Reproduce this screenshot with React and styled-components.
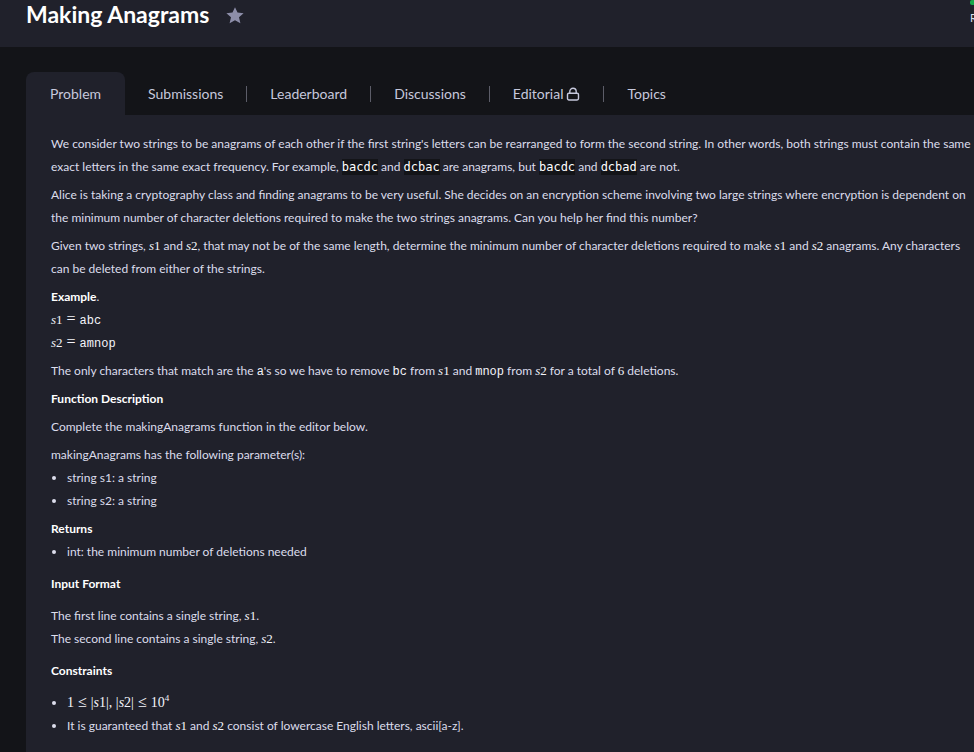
import React from "react";
import styled, { createGlobalStyle } from "styled-components";

const Global = createGlobalStyle`
  * { box-sizing: border-box; }
  html { overflow-x: hidden; scrollbar-width: none; }
  body {
    margin: 0;
    background: #131418;
    color: #dcddec;
    font: 400 12px/23px Lato, "Liberation Sans", sans-serif;
  }
  #root {
    display: flex;
    flex-direction: column;
    min-height: 100vh;
  }
`;

const Header = styled.header`
  display: flex;
  align-items: flex-start;
  height: 47px;
  padding-left: 26px;
  background: #20212b;
`;

const Title = styled.h1`
  margin: 0;
  color: #fff;
  font-size: 23px;
  line-height: 28px;
  font-weight: 700;
`;

const StarButton = styled.button`
  display: flex;
  margin: 7px 0 0 17px;
  padding: 0;
  border: 0;
  background: none;
  color: #8d8ea9;
`;

const Rank = styled.div`
  display: flex;
  flex-direction: column;
  gap: 6px;
  width: 4px;
  margin-left: auto;
  overflow: hidden;
  color: #dcddec;
  font-size: 11px;
  line-height: 14px;
`;

const RankBar = styled.span`
  flex: none;
  width: 40px;
  height: 5px;
  border-radius: 2px;
  background: #1ba94c;
`;

const Page = styled.main`
  display: flex;
  flex: 1;
  flex-direction: column;
  padding: 25px 0 0 26px;
`;

const Tabs = styled.nav`
  display: flex;
  height: 43px;
`;

const Tab = styled.a`
  display: flex;
  align-items: center;
  gap: 3px;
  padding: 0 ${(p) => (p.$active ? 24 : 23)}px;
  border-radius: 8px 8px 0 0;
  background: ${(p) => (p.$active ? "#20212b" : "transparent")};
  color: #c6c8dc;
  font-size: 14px;
  line-height: 20px;
  text-decoration: none;
`;

const Divider = styled.span`
  align-self: center;
  width: 1px;
  height: 16px;
  background: #5c5d68;
`;

const Panel = styled.article`
  display: flex;
  flex: 1;
  flex-direction: column;
  gap: 9px;
  padding: 17px 0 0 25px;
  background: #20212b;
`;

const Section = styled.section`
  display: flex;
  flex-direction: column;
  gap: ${(p) => (p.$spaced ? 9 : 5)}px;
`;

const Group = styled.div``;

const Text = styled.p`
  margin: 0;
`;

const Strong = styled.strong`
  color: #fff;
  font-weight: 700;
`;

const Heading = styled.h2`
  margin: 0;
  color: #fff;
  font-size: 12px;
  line-height: 23px;
  font-weight: 700;
`;

const List = styled.ul`
  margin: 0;
  padding-left: 16px;
  list-style: none;
`;

const Item = styled.li`
  &::before {
    content: "";
    float: left;
    width: 4px;
    height: 4px;
    margin: 10px 0 0 -15px;
    border-radius: 50%;
    background: #dcddec;
  }
`;

const Code = styled.code`
  padding: 1px 0;
  background: #131418;
  color: #fff;
  font: 12px/12px "DejaVu Sans Mono", monospace;
`;

const MathText = styled.span`
  color: #f4f4fa;
  font-family: "Liberation Serif", serif;
  font-size: ${(p) => (p.$large ? 14 : 13)}px;
  line-height: 13px;
  white-space: nowrap;
`;

const Relation = styled.span`
  margin: 0 4px;
  font-size: 16px;
  line-height: 13px;
`;

const Power = styled.sup`
  font-size: 9px;
  line-height: 0;
`;

const Mono = styled.span`
  color: #f4f4fa;
  font: 12px/12px "Liberation Mono", monospace;
`;

const Var = ({ n }) => (
  <MathText><i>s</i>{n}</MathText>
);

const Star = () => (
  <svg width="18" height="17" viewBox="0 0 18 17" fill="currentColor" aria-hidden="true">
    <path d="M9 .2l2.5 5.4 6.1.6-4.6 4.1 1.4 6L9 13.2l-5.4 3.1 1.4-6L.4 6.2l6.1-.6z" />
  </svg>
);

const Lock = () => (
  <svg width="14" height="14" viewBox="0 0 14 14" fill="none" stroke="currentColor" strokeWidth="1.4" aria-hidden="true">
    <rect x="1.5" y="6.2" width="11" height="6.8" rx="1.4" />
    <path d="M3.8 6V4.4a3.2 3.2 0 0 1 6.4 0V6" />
  </svg>
);

const TABS = [
  { label: "Submissions" },
  { label: "Leaderboard" },
  { label: "Discussions" },
  { label: "Editorial", locked: true },
  { label: "Topics" },
];

export default function App() {
  return (
    <>
      <Global />
      <Header>
        <Title>Making Anagrams</Title>
        <StarButton aria-label="Bookmark challenge"><Star /></StarButton>
        <Rank><RankBar />R</Rank>
      </Header>
      <Page>
        <Tabs>
          <Tab href="#problem" $active aria-current="page">Problem</Tab>
          {TABS.map((t, i) => (
            <React.Fragment key={t.label}>
              {i > 0 && <Divider />}
              <Tab href={"#" + t.label.toLowerCase()}>
                {t.label}
                {t.locked && <Lock />}
              </Tab>
            </React.Fragment>
          ))}
        </Tabs>
        <Panel>
          <Section>
            <Text>
              We consider two strings to be anagrams of each other if the first string's letters can be rearranged to form the second string. In other words, both strings must contain the same exact letters in the same exact frequency. For example, <Code>bacdc</Code> and <Code>dcbac</Code> are anagrams, but <Code>bacdc</Code> and <Code>dcbad</Code> are not.
            </Text>
            <Text>
              Alice is taking a cryptography class and finding anagrams to be very useful. She decides on an encryption scheme involving two large strings where encryption is dependent on the minimum number of character deletions required to make the two strings anagrams. Can you help her find this number?
            </Text>
            <Text>
              Given two strings, <Var n="1" /> and <Var n="2" />, that may not be of the same length, determine the minimum number of character deletions required to make <Var n="1" /> and <Var n="2" /> anagrams. Any characters can be deleted from either of the strings.
            </Text>
            <Text>
              <Strong>Example</Strong>.<br />
              <Var n="1" /><MathText><Relation>=</Relation></MathText><Mono>abc</Mono><br />
              <Var n="2" /><MathText><Relation>=</Relation></MathText><Mono>amnop</Mono>
            </Text>
            <Text>
              The only characters that match are the <Mono>a</Mono>'s so we have to remove <Mono>bc</Mono> from <Var n="1" /> and <Mono>mnop</Mono> from <Var n="2" /> for a total of <MathText>6</MathText> deletions.
            </Text>
            <Heading>Function Description</Heading>
            <Text>Complete the makingAnagrams function in the editor below.</Text>
            <Group>
              <Text>makingAnagrams has the following parameter(s):</Text>
              <List>
                <Item>string s1: a string</Item>
                <Item>string s2: a string</Item>
              </List>
            </Group>
            <Group>
              <Heading>Returns</Heading>
              <List>
                <Item>int: the minimum number of deletions needed</Item>
              </List>
            </Group>
          </Section>
          <Section $spaced>
            <Heading>Input Format</Heading>
            <Text>
              The first line contains a single string, <Var n="1" />.<br />
              The second line contains a single string, <Var n="2" />.
            </Text>
          </Section>
          <Section $spaced>
            <Heading>Constraints</Heading>
            <List>
              <Item>
                <MathText $large>
                  1<Relation>≤</Relation>|<i>s</i>1|, |<i>s</i>2|<Relation>≤</Relation>10<Power>4</Power>
                </MathText>
              </Item>
              <Item>
                It is guaranteed that <Var n="1" /> and <Var n="2" /> consist of lowercase English letters, ascii[a-z].
              </Item>
            </List>
          </Section>
          <Section $spaced>
            <Heading>Sample Input</Heading>
          </Section>
        </Panel>
      </Page>
    </>
  );
}
